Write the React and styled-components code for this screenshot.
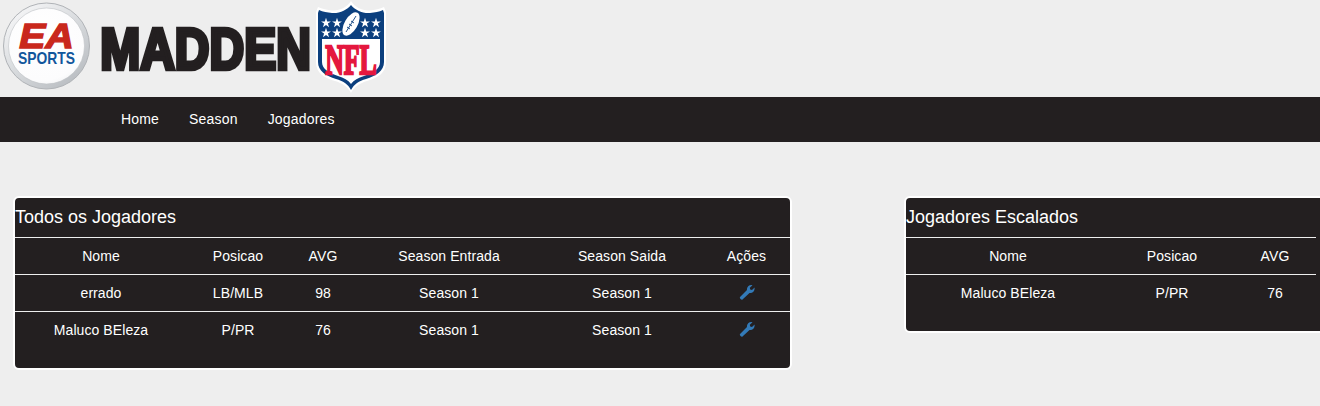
import React from "react";
import styled, { createGlobalStyle } from "styled-components";

const GlobalStyle = createGlobalStyle`
  html, body {
    margin: 0;
    padding: 0;
    background: #eeeeee;
    overflow: hidden;
    font-family: "Liberation Sans", Arial, sans-serif;
    font-size: 14px;
    color: #fff;
  }
`;

const allPlayers = [
  { name: "errado", pos: "LB/MLB", avg: 98, from: "Season 1", to: "Season 1" },
  { name: "Maluco BEleza", pos: "P/PR", avg: 76, from: "Season 1", to: "Season 1" },
];

const starters = [{ name: "Maluco BEleza", pos: "P/PR", avg: 76 }];

function Star({ x, y }) {
  const pts = [];
  for (let i = 0; i < 10; i++) {
    const r = i % 2 === 0 ? 5.2 : 2;
    const a = (Math.PI / 5) * i - Math.PI / 2;
    pts.push(`${(x + r * Math.cos(a)).toFixed(2)},${(y + r * Math.sin(a)).toFixed(2)}`);
  }
  return <polygon points={pts.join(" ")} fill="#fff" />;
}

function EaLogo() {
  return (
    <svg width="92" height="92" viewBox="0 0 92 92">
      <defs>
        <linearGradient id="ring" x1="0.1" y1="0" x2="0.9" y2="1">
          <stop offset="0" stopColor="#fafafb" />
          <stop offset="0.55" stopColor="#d4d7da" />
          <stop offset="1" stopColor="#b4b8bd" />
        </linearGradient>
        <radialGradient id="face" cx="0.45" cy="0.35" r="0.8">
          <stop offset="0" stopColor="#ffffff" />
          <stop offset="0.75" stopColor="#fcfcfd" />
          <stop offset="1" stopColor="#e9ebed" />
        </radialGradient>
      </defs>
      <circle cx="46.5" cy="46" r="43" fill="url(#ring)" stroke="#b0b3b7" strokeWidth="1" />
      <circle cx="46.5" cy="46" r="38" fill="url(#face)" stroke="#bfc2c6" strokeWidth="0.6" />
      <text
        transform="translate(46.5 48) scale(1.12 1)"
        textAnchor="middle"
        fontFamily="Liberation Sans"
        fontWeight="700"
        fontStyle="italic"
        fontSize="35"
        fill="#c9281c"
        stroke="#c9281c"
        strokeWidth="1.4"
      >
        EA
      </text>
      <text
        transform="translate(46.5 63.5) scale(0.84 1)"
        textAnchor="middle"
        fontFamily="Liberation Sans"
        fontWeight="700"
        fontSize="16.5"
        fill="#11569c"
      >
        SPORTS
      </text>
    </svg>
  );
}

function Wordmark() {
  return (
    <svg width="216" height="92" viewBox="0 0 216 92">
      <text
        transform="translate(105.5 68.5) scale(0.835 1)"
        textAnchor="middle"
        fontFamily="Liberation Sans"
        fontWeight="700"
        fontSize="57.5"
        fill="#231f20"
        stroke="#231f20"
        strokeWidth="4.4"
      >
        MADDEN
      </text>
    </svg>
  );
}

function NflShield() {
  return (
    <svg width="72" height="94" viewBox="0 0 72 94">
      <path
        d="M35 1 C39 7 46 11 54 10.5 C59 10 64 9 68 7 L70 12 L70 62 C70 73 62 78 51 81 C44 83 38 87 35 93 C32 87 26 83 19 81 C8 78 0 73 0 62 L0 12 L2 7 C6 9 11 10 16 10.5 C24 11 31 7 35 1 Z"
        fill="#fff"
      />
      <path
        d="M35 5 C39 10 46 13.5 54 13 C59 12.5 63 12 67 10 L68 13 L68 62 C68 71 60 76 50 79 C43 81 38 84 35 90 C32 84 27 81 20 79 C10 76 2 71 2 62 L2 13 L3 10 C7 12 11 12.5 16 13 C24 13.5 31 10 35 5 Z"
        fill="#0b3f7e"
      />
      <path
        d="M6 39 L64 39 L64 62 C64 69 57 73 48 76 C42 78 38 80 35 84 C32 80 28 78 22 76 C13 73 6 69 6 62 Z"
        fill="#fff"
      />
      <Star x={10} y={23} />
      <Star x={21} y={23} />
      <Star x={10} y={33} />
      <Star x={21} y={33} />
      <Star x={49} y={23} />
      <Star x={60} y={23} />
      <Star x={49} y={33} />
      <Star x={60} y={33} />
      <ellipse cx="35" cy="24" rx="6.5" ry="13" fill="#fff" transform="rotate(30 35 24)" />
      <path d="M40 16 L30 32 M35 21 L38 23 M33 24 L36 26 M31 27 L34 29" stroke="#0b3f7e" strokeWidth="0.9" fill="none" />
      <text
        transform="translate(35 74) scale(0.6 1)"
        textAnchor="middle"
        fontFamily="Liberation Serif"
        fontWeight="700"
        fontSize="43"
        fill="#e4173e"
        stroke="#e4173e"
        strokeWidth="2.4"
      >
        NFL
      </text>
    </svg>
  );
}

function WrenchIcon() {
  return (
    <Wrench viewBox="0 0 16 16">
      <path d="M1 13 L8 6 C7.5 3.5 9.5 1 12.5 1 L13.5 1.2 L10.8 3.8 L11.2 5.6 L13 6 L15.6 3.4 C16 7 13.5 9.5 10.5 9 L3.5 15.5 C2.5 16.3 0.2 14.3 1 13 Z" />
    </Wrench>
  );
}

export default function App() {
  return (
    <>
      <GlobalStyle />
      <Header>
        <EaLogo />
        <WordmarkSlot>
          <Wordmark />
        </WordmarkSlot>
        <NflShield />
      </Header>
      <Navbar>
        <NavLink>Home</NavLink>
        <NavLink>Season</NavLink>
        <NavLink>Jogadores</NavLink>
      </Navbar>
      <Main>
        <Panel $width={779}>
          <PanelTitle>Todos os Jogadores</PanelTitle>
          <Table>
            <colgroup>
              {[172, 102, 68, 184, 162, 87].map((w, i) => (
                <Col key={i} $width={w} />
              ))}
            </colgroup>
            <thead>
              <tr>
                <Cell as="th">Nome</Cell>
                <Cell as="th">Posicao</Cell>
                <Cell as="th">AVG</Cell>
                <Cell as="th">Season Entrada</Cell>
                <Cell as="th">Season Saida</Cell>
                <Cell as="th">Ações</Cell>
              </tr>
            </thead>
            <tbody>
              {allPlayers.map((p) => (
                <Row key={p.name}>
                  <Cell>{p.name}</Cell>
                  <Cell>{p.pos}</Cell>
                  <Cell>{p.avg}</Cell>
                  <Cell>{p.from}</Cell>
                  <Cell>{p.to}</Cell>
                  <Cell>
                    <WrenchIcon />
                  </Cell>
                </Row>
              ))}
            </tbody>
          </Table>
        </Panel>
        <Panel $width={440}>
          <PanelTitle>Jogadores Escalados</PanelTitle>
          <Table $width={410}>
            <colgroup>
              {[204, 124, 82].map((w, i) => (
                <Col key={i} $width={w} />
              ))}
            </colgroup>
            <thead>
              <tr>
                <Cell as="th">Nome</Cell>
                <Cell as="th">Posicao</Cell>
                <Cell as="th">AVG</Cell>
              </tr>
            </thead>
            <tbody>
              {starters.map((p) => (
                <Row key={p.name}>
                  <Cell>{p.name}</Cell>
                  <Cell>{p.pos}</Cell>
                  <Cell>{p.avg}</Cell>
                </Row>
              ))}
            </tbody>
          </Table>
        </Panel>
      </Main>
    </>
  );
}

const Header = styled.header`
  display: flex;
  align-items: flex-start;
  height: 97px;
`;

const WordmarkSlot = styled.div`
  display: flex;
  margin-left: 8px;
  width: 216px;
  flex: none;
`;

const Navbar = styled.nav`
  display: flex;
  gap: 30px;
  height: 45px;
  align-items: center;
  padding-left: 121px;
  background: #231f20;
`;

const NavLink = styled.a`
  color: #fff;
  font-size: 14px;
  line-height: 20px;
  margin-top: -1px;
  letter-spacing: 0.18px;
`;

const Main = styled.main`
  display: flex;
  align-items: flex-start;
  gap: 112px;
  padding: 54px 0 0 13px;
`;

const Panel = styled.section`
  flex: none;
  box-sizing: border-box;
  width: ${(p) => p.$width}px;
  background: #231f20;
  border: 2px solid #fff;
  border-radius: 6px;
  padding-bottom: 20px;
`;

const PanelTitle = styled.h3`
  margin: 0;
  height: 39px;
  line-height: 38px;
  font-size: 18px;
  font-weight: 400;
  color: #fff;
`;

const Table = styled.table`
  border-collapse: collapse;
  table-layout: fixed;
  width: ${(p) => (p.$width ? `${p.$width}px` : "100%")};
  border-top: 1px solid #eee;
`;

const Col = styled.col`
  width: ${(p) => p.$width}px;
`;

const Row = styled.tr`
  &:not(:last-child) {
    border-bottom: 1px solid #eee;
  }
`;

const Cell = styled.td`
  height: 36px;
  padding: 0;
  text-align: center;
  font-size: 14px;
  font-weight: 400;
  color: #fff;
  letter-spacing: 0.08px;
  thead & {
    border-bottom: 1px solid #eee;
  }
`;

const Wrench = styled.svg`
  width: 16px;
  height: 16px;
  fill: #337ab7;
  vertical-align: -1px;
`;
